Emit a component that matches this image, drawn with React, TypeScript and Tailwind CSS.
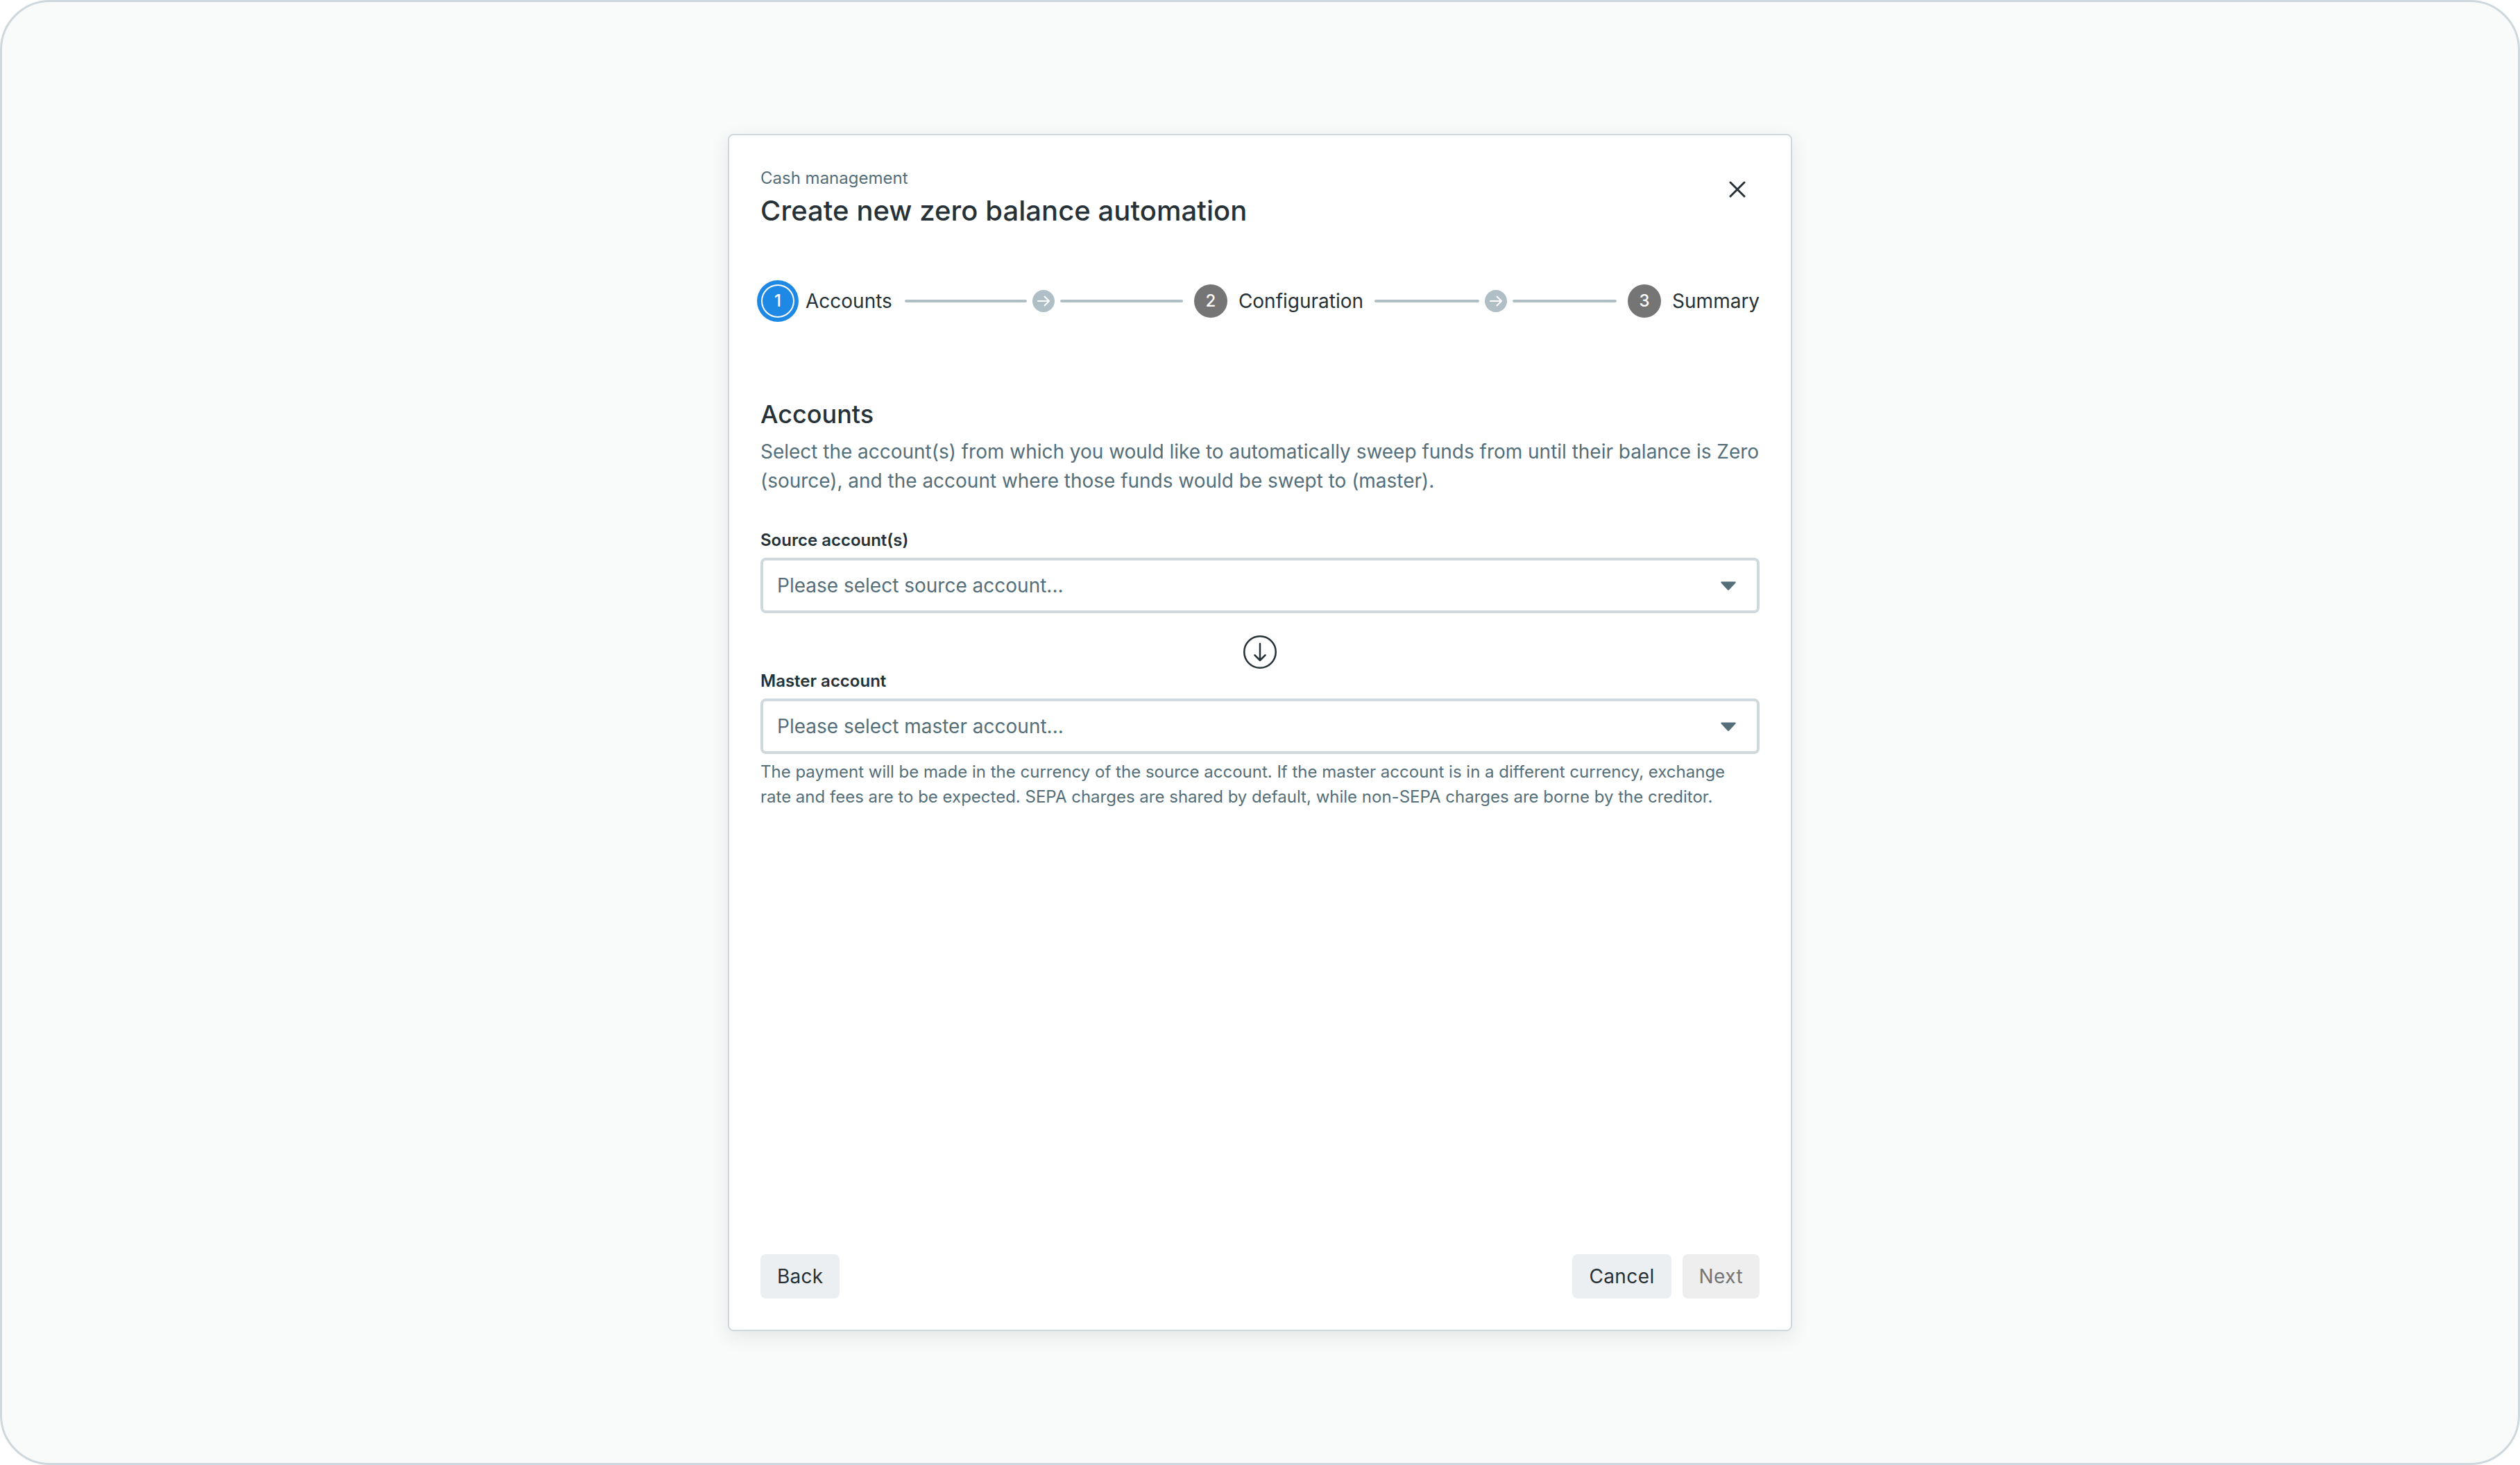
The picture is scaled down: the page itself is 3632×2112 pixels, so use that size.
import React from "react";

function ArrowDot() {
  return (
    <span className="flex h-8 w-8 shrink-0 items-center justify-center rounded-full bg-[#b0bec5]">
      <svg width="20" height="20" viewBox="0 0 20 20" fill="none" stroke="#ffffff" strokeWidth="2" strokeLinecap="round" strokeLinejoin="round">
        <path d="M2 10h16M11.500 3.500 18 10l-6.500 6.500" />
      </svg>
    </span>
  );
}

function Connector({ width }: { width: string }) {
  return (
    <div className={`flex shrink-0 items-center gap-2 ${width}`}>
      <span className="h-1 flex-1 rounded-full bg-[#b0bec5]" />
      <ArrowDot />
      <span className="h-1 flex-1 rounded-full bg-[#b0bec5]" />
    </div>
  );
}

function Step({ n, label, active }: { n: number; label: string; active?: boolean }) {
  return (
    <div className="flex shrink-0 items-center gap-4">
      <span
        className={
          active
            ? "flex h-12 w-12 items-center justify-center rounded-full bg-[#1e88e5] text-[24px] font-medium text-white shadow-[inset_0_0_0_2px_#ffffff,0_0_0_6px_#1e88e5]"
            : "flex h-12 w-12 items-center justify-center rounded-full bg-[#757575] text-[24px] font-medium text-white"
        }
      >
        {n}
      </span>
      <span className="text-[28px] leading-[40px] text-[#263238]">{label}</span>
    </div>
  );
}

function Select({ label, placeholder }: { label: string; placeholder: string }) {
  return (
    <div className="flex flex-col">
      <label className="text-[24px] font-semibold leading-[32px] text-[#263238]">{label}</label>
      <div className="mt-[9px] flex h-20 items-center justify-between rounded-lg border-4 border-[#cfd8dc] bg-white pl-5 pr-[30px]">
        <span className="text-[28px] leading-[40px] text-[#546e7a]">{placeholder}</span>
        <svg width="22" height="13" viewBox="0 0 22 13" fill="#546e7a">
          <path d="M1.500 0.500h19c1 0 1.500 1 1 1.800l-9.300 10a1.600 1.600 0 0 1-2.400 0L0.500 2.300c-.5-.8 0-1.800 1-1.800z" />
        </svg>
      </div>
    </div>
  );
}

export default function App() {
  return (
    <div className="flex h-[2112px] w-full items-center justify-center rounded-[72px] border-[3px] border-[#cfd8dc] bg-[#f9fbfa] font-['Inter',sans-serif]">
      <div className="flex h-[1726px] w-[1534px] flex-col rounded-lg border-2 border-[#cfd8dc] bg-white p-[45px] pt-[46px] shadow-[0_8px_28px_rgba(38,50,56,0.1)]">
        <div className="flex items-start justify-between">
          <div className="flex flex-col">
            <span className="text-[24px] leading-[32px] text-[#546e7a]">Cash management</span>
            <h1 className="mt-[7px] text-[40px] font-medium leading-[48px] tracking-[0.05px] text-[#263238]">
              Create new zero balance automation
            </h1>
          </div>
          <button className="flex h-16 w-16 items-center justify-center">
            <svg width="24" height="24" viewBox="0 0 24 24" fill="none" stroke="#263238" strokeWidth="3" strokeLinecap="round">
              <path d="M2 2l20 20M22 2 2 22" />
            </svg>
          </button>
        </div>

        <div className="mt-[82px] flex items-center gap-4 pl-px">
          <Step n={1} label="Accounts" active />
          <div className="ml-[2px] flex">
            <Connector width="w-[401px]" />
          </div>
          <Step n={2} label="Configuration" />
          <Connector width="w-[349px]" />
          <Step n={3} label="Summary" />
        </div>

        <h2 className="mt-[115px] text-[36px] font-medium leading-[48px] text-[#263238]">Accounts</h2>
        <p className="mt-[9px] mr-[-6px] text-[28px] leading-[42px] tracking-[-0.02px] text-[#546e7a]">
          Select the account(s) from which you would like to automatically sweep funds from until their balance is Zero (source), and the account where those funds would be swept to (master).
        </p>

        <div className="mt-[49px]">
          <Select label="Source account(s)" placeholder="Please select source account..." />
        </div>
        <div className="mt-[32px] flex justify-center">
          <svg width="48" height="48" viewBox="0 0 48 48" fill="none" stroke="#263238" strokeWidth="2.500" strokeLinecap="round" strokeLinejoin="round">
            <circle cx="24" cy="24" r="22.750" />
            <path d="M24 12v24M16.500 28.500 24 36l7.500-7.500" />
          </svg>
        </div>
        <div className="mt-[2px]">
          <Select label="Master account" placeholder="Please select master account..." />
        </div>
        <p className="mt-[8px] text-[24px] leading-[36px] text-[#546e7a]">
          The payment will be made in the currency of the source account. If the master account is in a different currency, exchange rate and fees are to be expected. SEPA charges are shared by default, while non-SEPA charges are borne by the creditor.
        </p>

        <div className="mt-auto flex items-center justify-between">
          <button className="flex h-16 items-center rounded-lg bg-[#eceff1] px-6 text-[28px] tracking-[0.2px] text-[#263238]">Back</button>
          <div className="flex items-center gap-4">
            <button className="flex h-16 items-center rounded-lg bg-[#eceff1] px-6 text-[28px] tracking-[0.4px] text-[#263238]">Cancel</button>
            <button className="flex h-16 items-center rounded-lg bg-[#eeeeee] px-6 text-[28px] tracking-[0.4px] text-[#757575]">Next</button>
          </div>
        </div>
      </div>
    </div>
  );
}
